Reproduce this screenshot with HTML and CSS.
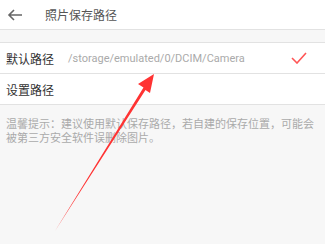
FILE: index.html
```html
<!DOCTYPE html>
<html>
<head>
<meta charset="utf-8">
<link rel="stylesheet" href="styles.css">
</head>
<body>
<div class="page">
  <header class="bar">
    <svg class="back" width="16" height="12" viewBox="0 0 16 12"><path d="M15 6H2M7 1L2 6l5 5" fill="none" stroke="#666" stroke-width="1.6"/></svg>
    <span class="title">照片保存路径</span>
  </header>
  <div class="gap"></div>
  <div class="list">
    <div class="row">
      <span class="label">默认路径</span>
      <span class="path">/storage/emulated/0/DCIM/Camera</span>
      <svg class="check" width="16" height="12" viewBox="0 0 16 12"><path d="M1 6l5 5L15 1" fill="none" stroke="#f55" stroke-width="1.6"/></svg>
    </div>
    <div class="row">
      <span class="label">设置路径</span>
    </div>
  </div>
  <p class="tip">温馨提示：建议使用默认保存路径，若自建的保存位置，可能会被第三方安全软件误删除图片。</p>
  <svg class="arrow" width="325" height="244" viewBox="0 0 325 244"><polygon points="154,74 138,84 143.5,87.5 55,231 145.5,90 150,93" fill="#f33"/></svg>
</div>
</body>
</html>
```
FILE: styles.css
```css
html, body { margin: 0; padding: 0; }
body { width: 325px; height: 244px; overflow: hidden; background: #f7f7f7; font-family: "Noto Sans CJK SC", "Noto Sans", sans-serif; }
.page { position: relative; height: 244px; }
.bar { height: 30px; background: #fff; display: flex; align-items: center; border-bottom: 1px solid #e2e2e2; box-sizing: border-box; }
.back { margin-left: 7px; }
.title { margin-left: 22px; font-size: 12px; color: #555; }
.gap { height: 12px; border-bottom: 1px solid #e2e2e2; }
.list { background: #fff; }
.row { height: 31px; display: flex; align-items: center; border-bottom: 1px solid #e2e2e2; box-sizing: border-box; padding-left: 6px; }
.label { font-size: 12px; color: #333; width: 62px; }
.path { font-family: Roboto, "Liberation Sans", sans-serif; font-size: 11px; color: #aaa; flex: 1; }
.check { margin-right: 18px; }
.tip { margin: 0; padding: 11px 10px 0 6px; font-size: 11px; line-height: 14px; color: #aaa; }
.arrow { position: absolute; left: 0; top: 0; }
```
